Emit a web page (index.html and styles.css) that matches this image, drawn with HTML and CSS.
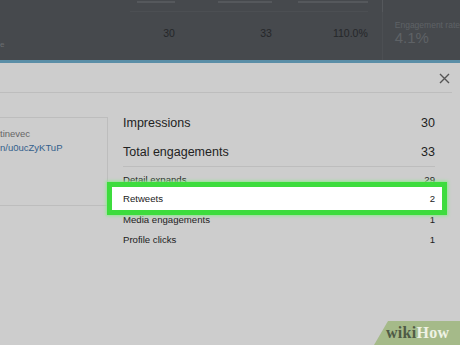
FILE: index.html
```html
<!DOCTYPE html>
<html lang="en">
<head>
    <meta charset="UTF-8">
    <meta name="viewport" content="width=device-width, initial-scale=1.0">
    <title>Tweet activity</title>
    <link rel="stylesheet" href="styles.css">
</head>
<body>
    <div class="backdrop">
        <div class="head-row">
            <div class="h-label"></div>
            <div class="h-col"><span class="h-cut w1"></span></div>
            <div class="h-col wide"><span class="h-cut w2"></span></div>
            <div class="h-col"><span class="h-cut w3"></span></div>
            <div class="h-side"><span class="h-cut w4"></span></div>
        </div>
        <div class="stats-row">
            <div class="c-label">e</div>
            <div class="c-num n1">30</div>
            <div class="c-num n2">33</div>
            <div class="c-num n3">110.0%</div>
            <div class="c-side">
                <span class="side-label">Engagement rate</span>
                <span class="side-value">4.1%</span>
            </div>
        </div>
    </div>
    <div class="strip"></div>
    <div class="modal">
        <div class="modal-head">
            <button class="close">
                <svg width="11" height="11" viewBox="0 0 11 11"><path d="M1 1L10 10M10 1L1 10" stroke="#555" stroke-width="1.4" fill="none"/></svg>
            </button>
        </div>
        <div class="modal-body">
            <div class="tweet-card">
                <p class="tweet-user">tinevec</p>
                <p class="tweet-link">n/u0ucZyKTuP</p>
            </div>
            <div class="metrics">
                <div class="big-row">
                    <span>Impressions</span>
                    <span>30</span>
                </div>
                <div class="big-row last">
                    <span>Total engagements</span>
                    <span>33</span>
                </div>
                <div class="small-row first">
                    <span>Detail expands</span>
                    <span>29</span>
                </div>
                <div class="small-row highlight">
                    <span>Retweets</span>
                    <span>2</span>
                </div>
                <div class="small-row">
                    <span>Media engagements</span>
                    <span>1</span>
                </div>
                <div class="small-row">
                    <span>Profile clicks</span>
                    <span>1</span>
                </div>
            </div>
        </div>
    </div>
    <div class="wikihow"><span class="wiki">wiki</span><span class="how">How</span></div>
</body>
</html>
```

FILE: styles.css
```css
body {
    margin: 0;
    width: 460px;
    height: 345px;
    overflow: hidden;
    background-color: #cdcdcd;
    font-family: "Liberation Sans", Arial, sans-serif;
    color: #222;
}
.backdrop {
    height: 60px;
    background-color: #46494d;
}
.head-row {
    display: flex;
    height: 12px;
}
.h-label {
    width: 130px;
}
.h-col {
    width: 45px;
    border-bottom: 1px solid #4c4f53;
    display: flex;
    justify-content: flex-end;
}
.h-col.wide {
    width: 97px;
}
.h-col:nth-child(4) {
    width: 96px;
}
.h-cut {
    height: 2px;
    margin-top: 1px;
    background-color: #55585c;
}
.w1 { width: 38px; }
.w2 { width: 54px; }
.w3 { width: 70px; }
.w4 { width: 40px; margin-left: 22px; }
.h-side {
    margin-left: 14px;
    border-left: 1px solid #55585c;
    flex: 1;
}
.stats-row {
    display: flex;
    height: 48px;
}
.c-label {
    width: 130px;
    font-size: 8px;
    color: #6a6d70;
    padding-top: 28px;
    box-sizing: border-box;
}
.c-num {
    width: 45px;
    text-align: right;
    font-size: 10.5px;
    color: #25272a;
    padding-top: 15px;
    box-sizing: border-box;
}
.c-num.n2 {
    width: 97px;
}
.c-num.n3 {
    width: 96px;
}
.c-side {
    margin-left: 14px;
    padding-left: 12px;
    border-left: 1px solid #4c4f53;
    display: flex;
    flex-direction: column;
    color: #5e6266;
    padding-top: 8px;
    white-space: nowrap;
}
.side-label {
    font-size: 8.5px;
    line-height: 10px;
}
.side-value {
    font-size: 15px;
    line-height: 16px;
}
.strip {
    height: 3px;
    background-color: #5a8ea7;
}
.modal-head {
    height: 29px;
    margin-right: 8px;
    border-bottom: 1px solid #bdbdbd;
    display: flex;
    justify-content: flex-end;
    align-items: center;
}
.close {
    background: none;
    border: none;
    padding: 0;
    width: 11px;
    height: 11px;
    margin-right: 2px;
    margin-top: 1px;
    cursor: pointer;
}
.close svg {
    display: block;
}
.modal-body {
    display: flex;
    align-items: flex-start;
}
.tweet-card {
    width: 108px;
    height: 89px;
    margin-top: 24px;
    border: 1px solid #bdbdbd;
    border-left: none;
    white-space: nowrap;
    padding-top: 9px;
    box-sizing: border-box;
}
.tweet-user {
    margin: 0;
    font-size: 9.5px;
    line-height: 14px;
    color: #666;
}
.tweet-link {
    margin: 0;
    font-size: 9.5px;
    line-height: 14px;
    color: #33608c;
}
.metrics {
    width: 312px;
    margin-left: 15px;
    margin-top: 16px;
}
.big-row {
    display: flex;
    justify-content: space-between;
    font-size: 12.5px;
    height: 29px;
    line-height: 29px;
}
.big-row.last {
    height: 28px;
    border-bottom: 1px solid #bdbdbd;
}
.small-row {
    display: flex;
    justify-content: space-between;
    font-size: 9.6px;
    height: 20px;
    line-height: 20px;
}
.small-row.first {
    margin-top: 3px;
}
.small-row.highlight {
    position: relative;
    z-index: 1;
    margin: -8px -12px -5px -16px;
    padding: 2px 7px 1px 11px;
    border: 5px solid #3ddc3d;
    background-color: #fff;
    box-shadow: 0 0 3px 1px #8ee88e;
}
.wikihow {
    position: absolute;
    right: 0;
    bottom: 0;
    width: 86px;
    height: 24px;
    background-color: #a5ba89;
    clip-path: polygon(14px 0, 100% 0, 100% 100%, 0 100%);
    font-family: "Liberation Serif", "Times New Roman", serif;
    font-weight: bold;
    font-size: 16px;
    line-height: 24px;
    padding-left: 12px;
    box-sizing: border-box;
    letter-spacing: 0.3px;
}
.wiki {
    color: #4f5b45;
}
.how {
    color: #eef2e4;
}
```
